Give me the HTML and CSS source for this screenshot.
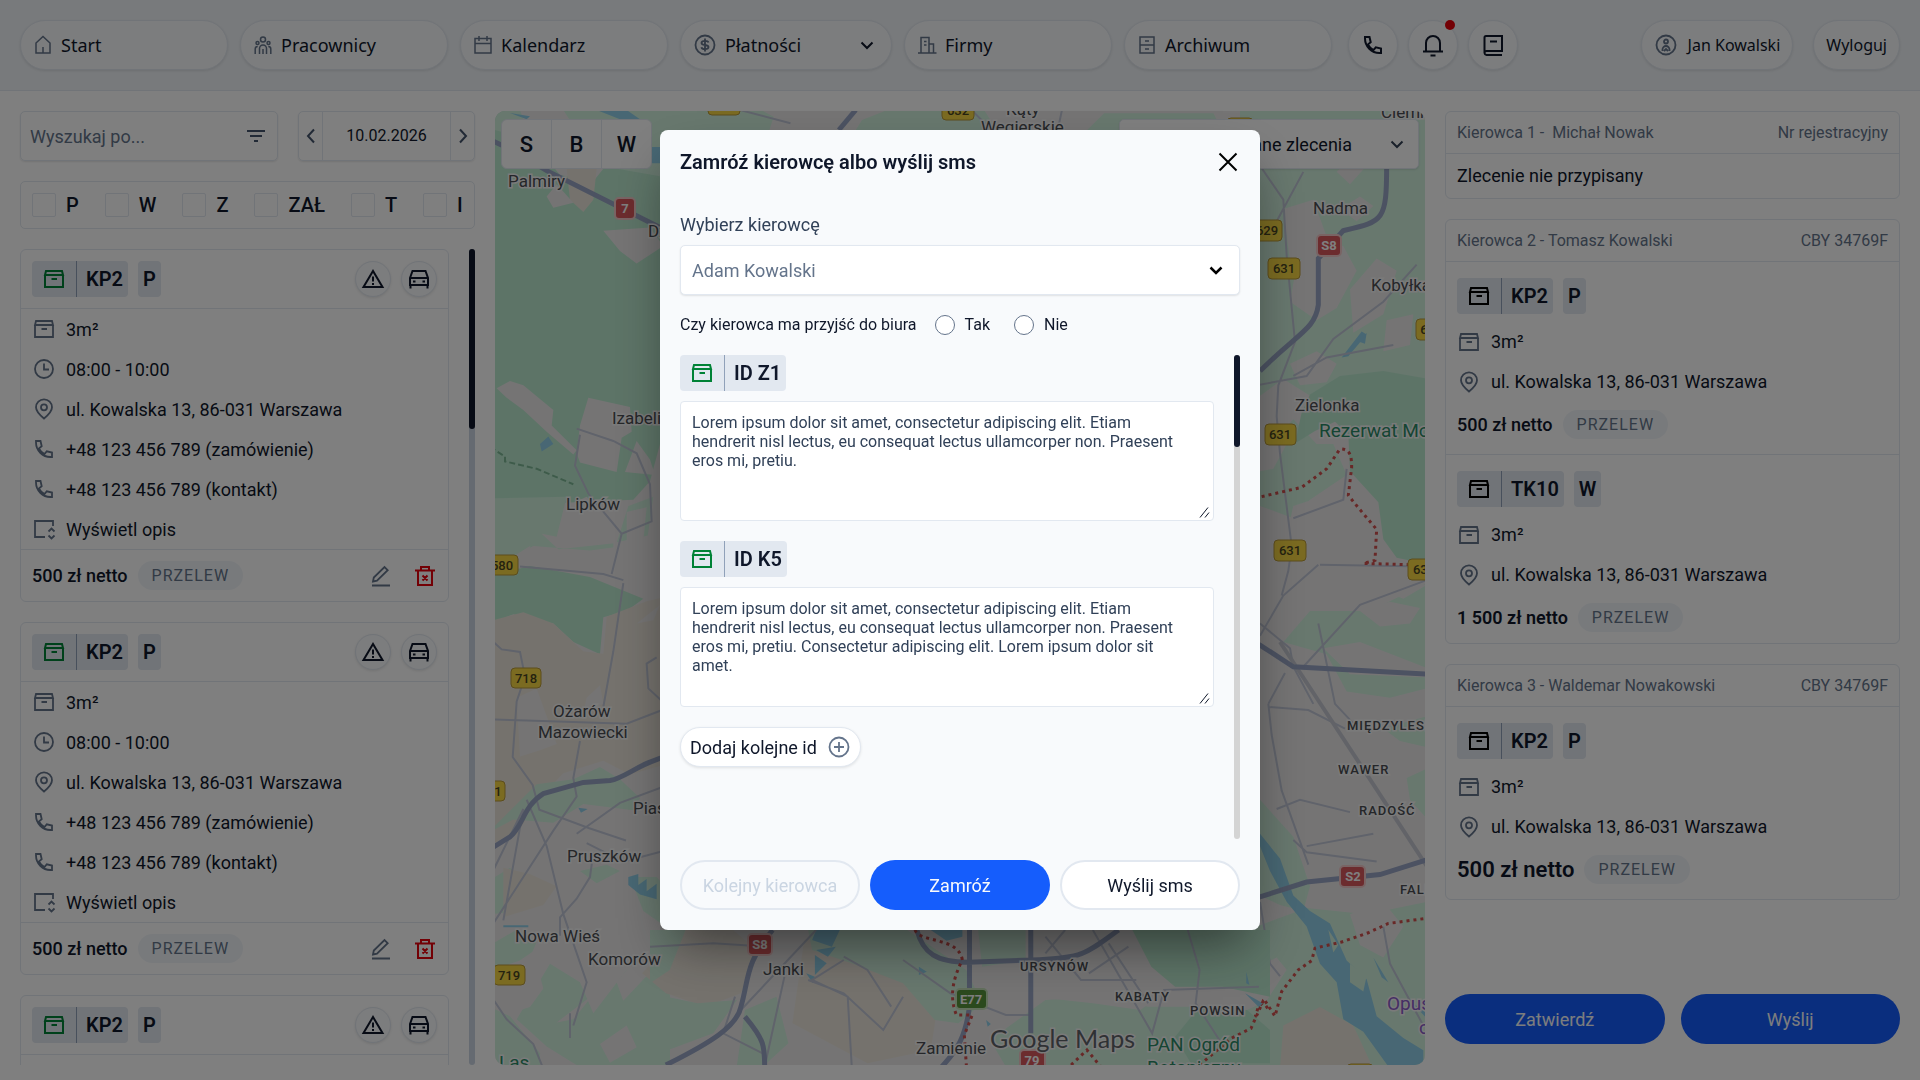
FILE: index.html
```html
<!DOCTYPE html>
<html lang="pl">
<head>
  <meta charset="UTF-8">
  <meta name="viewport" content="width=device-width, initial-scale=1">
  <title>Panel zleceń</title>
  <link rel="stylesheet" href="styles.css">
</head>
<body>
  <!-- ikony -->
  <svg class="sprite" aria-hidden="true">
    <symbol id="i-box" viewBox="0 0 24 24"><path d="M3 8v12h18V8M3 8l1-4h16l1 4zM9.5 12H15"/></symbol>
    <symbol id="i-clock" viewBox="0 0 24 24"><circle cx="12" cy="12" r="9"/><path d="M12 6.5v6h5"/></symbol>
    <symbol id="i-pin" viewBox="0 0 24 24"><path d="M12 21.5C9 19 4 15 4 10.3a8 8 0 0 1 16 0C20 15 15 19 12 21.5z"/><circle cx="12" cy="10.3" r="3"/></symbol>
    <symbol id="i-phone" viewBox="0 0 24 24"><path d="M4 4h4.5l1.2 5.2-2.8 2.3a13 13 0 0 0 5.6 5.6l2.3-2.8L20 15.5V20h-1.5C10.5 20 4 13.5 4 5.5z"/></symbol>
    <symbol id="i-desc" viewBox="0 0 24 24"><path d="M21 9V4H3v16h10M16.5 14.5l3-3 3 3M16.5 18.5l3 3 3-3"/></symbol>
    <symbol id="i-edit" viewBox="0 0 24 24"><path d="M3 21.5h18M4 17.5l.8-4L15.5 3l3.2 3.2L8 16.7z"/></symbol>
    <symbol id="i-trash" viewBox="0 0 24 24"><path d="M2 6.5h20M8 6.5V3h8v3.5M5 6.5V21h14V6.5M9.5 11.5l5 5M14.5 11.5l-5 5"/></symbol>
    <symbol id="i-warn" viewBox="0 0 24 24"><path d="M12 4L2.5 20h19zM12 9.5v5M12 16v2"/></symbol>
    <symbol id="i-car" viewBox="0 0 24 24"><path d="M3 11l2.5-7h13L21 11v7H3zM3 11h18M3.5 18v3.5M20.5 18v3.5M6 14.5h2.5M15.5 14.5H18"/></symbol>
    <symbol id="i-chev" viewBox="0 0 24 24"><path d="M6.5 9.5L12 15l5.5-5.5"/></symbol>
    <symbol id="i-left" viewBox="0 0 24 24"><path d="M15 5.5L9 12l6 6.5"/></symbol>
    <symbol id="i-right" viewBox="0 0 24 24"><path d="M9 5.5l6 6.5-6 6.5"/></symbol>
    <symbol id="i-filter" viewBox="0 0 24 24"><path d="M3 7h18M6 12h12M10 17h4"/></symbol>
    <symbol id="i-home" viewBox="0 0 20 20"><path d="M3 8l7-6.5L17 8v10H3zM10 12v6"/></symbol>
    <symbol id="i-people" viewBox="0 0 20 20"><circle cx="10" cy="4.5" r="2.5"/><circle cx="4.5" cy="8" r="1.5"/><circle cx="15.5" cy="8" r="1.5"/><path d="M6.5 19v-5.5a3.5 3.5 0 0 1 7 0V19M2.2 19v-5c0-1.5.8-2.5 2.5-2.5M17.8 19v-5c0-1.5-.8-2.5-2.5-2.5M10 14v5"/></symbol>
    <symbol id="i-cal" viewBox="0 0 20 20"><path d="M2 3.5h16V18H2zM2 8.5h16M6 1v5M14 1v5"/></symbol>
    <symbol id="i-dollar" viewBox="0 0 24 24"><circle cx="12" cy="12" r="9.5"/><path d="M15.5 9.5C15 8 13.500 7.800 12 7.800c-2 0-3.500.7-3.500 2.100 0 3 7 1.200 7 4.200 0 1.400-1.500 2.100-3.500 2.100-1.600 0-3.200-.4-3.600-2M12 5.500v13"/></symbol>
    <symbol id="i-firm" viewBox="0 0 20 20"><path d="M1 18h18.5M4 18V2.5h8V18M12 9h4.5v9M7 6.5h2.5M7 10h2.5"/></symbol>
    <symbol id="i-arch" viewBox="0 0 20 20"><path d="M3 2h14v16H3zM3 10h14M8 6h4M8 14h4"/></symbol>
    <symbol id="i-bell" viewBox="0 0 24 24"><path d="M5 18.5V10a7 7 0 0 1 14 0v8.5M2 18.5h20M9.5 22.5h5"/></symbol>
    <symbol id="i-book" viewBox="0 0 24 24"><path d="M21 22H5.5A2.2 2.2 0 0 1 3.5 20V4.5c0-1 .8-1.5 1.5-1.5h16v15H5.500c-1.300 0-2 .8-2 2M9 8.500h7"/></symbol>
    <symbol id="i-user" viewBox="0 0 24 24"><circle cx="12" cy="12" r="9.5"/><circle cx="12" cy="8.5" r="2"/><path d="M8.5 18v-1.5a3.5 3.5 0 0 1 7 0V18M10 18l2-2 2 2"/></symbol>
    <symbol id="i-close" viewBox="0 0 24 24"><path d="M3.5 3.5l17 17M20.5 3.5l-17 17"/></symbol>
    <symbol id="i-plus" viewBox="0 0 24 24"><circle cx="12" cy="12" r="9.5"/><path d="M12 7v10M7 12h10"/></symbol>
  </svg>

  <header class="topbar">
    <nav class="nav">
      <a href="#" class="pill"><svg class="icon icon-sm"><use href="#i-home"/></svg>Start</a>
      <a href="#" class="pill"><svg class="icon icon-sm"><use href="#i-people"/></svg>Pracownicy</a>
      <a href="#" class="pill"><svg class="icon icon-sm"><use href="#i-cal"/></svg>Kalendarz</a>
      <button class="pill pill-menu"><svg class="icon"><use href="#i-dollar"/></svg>Płatności<svg class="icon icon-dark pill-arrow"><use href="#i-chev"/></svg></button>
      <a href="#" class="pill"><svg class="icon icon-sm"><use href="#i-firm"/></svg>Firmy</a>
      <a href="#" class="pill"><svg class="icon icon-sm"><use href="#i-arch"/></svg>Archiwum</a>
    </nav>
    <div class="quick">
      <button class="round" aria-label="Telefon"><svg class="icon icon-dark"><use href="#i-phone"/></svg></button>
      <button class="round" aria-label="Powiadomienia"><svg class="icon icon-dark"><use href="#i-bell"/></svg><span class="dot"></span></button>
      <button class="round" aria-label="Notatnik"><svg class="icon icon-dark"><use href="#i-book"/></svg></button>
    </div>
    <div class="account">
      <a href="#" class="pill pill-small"><svg class="icon"><use href="#i-user"/></svg>Jan Kowalski</a>
      <button class="pill pill-small">Wyloguj</button>
    </div>
  </header>

  <main class="layout">
    <section class="orders">
      <div class="tools">
        <label class="search">
          <input type="text" placeholder="Wyszukaj po..." aria-label="Wyszukaj">
          <svg class="icon icon-mid"><use href="#i-filter"/></svg>
        </label>
        <div class="date">
          <button aria-label="Poprzedni dzień"><svg class="icon icon-mid"><use href="#i-left"/></svg></button>
          <span>10.02.2026</span>
          <button aria-label="Następny dzień"><svg class="icon icon-mid"><use href="#i-right"/></svg></button>
        </div>
      </div>

      <div class="filters">
        <label><input type="checkbox">P</label>
        <label><input type="checkbox">W</label>
        <label><input type="checkbox">Z</label>
        <label><input type="checkbox">ZAŁ</label>
        <label><input type="checkbox">T</label>
        <label><input type="checkbox">I</label>
      </div>

      <div class="scroll">
        <div class="order-list">
          <article class="card">
            <div class="card-head">
              <span class="tag tag-split"><svg class="icon icon-green"><use href="#i-box"/></svg><b>KP2</b></span>
              <span class="tag">P</span>
              <button class="round round-sm push" aria-label="Uwaga"><svg class="icon icon-dark"><use href="#i-warn"/></svg></button>
              <button class="round round-sm" aria-label="Pojazd"><svg class="icon icon-dark"><use href="#i-car"/></svg></button>
            </div>
            <ul class="details">
              <li><svg class="icon"><use href="#i-box"/></svg>3m²</li>
              <li><svg class="icon"><use href="#i-clock"/></svg>08:00 - 10:00</li>
              <li><svg class="icon"><use href="#i-pin"/></svg>ul. Kowalska 13, 86-031 Warszawa</li>
              <li><svg class="icon"><use href="#i-phone"/></svg>+48 123 456 789 (zamówienie)</li>
              <li><svg class="icon"><use href="#i-phone"/></svg>+48 123 456 789 (kontakt)</li>
              <li><svg class="icon"><use href="#i-desc"/></svg>Wyświetl opis</li>
            </ul>
            <div class="card-foot">
              <span class="price">500 zł netto</span><span class="chip">PRZELEW</span>
              <button class="plain push" aria-label="Edytuj"><svg class="icon"><use href="#i-edit"/></svg></button>
              <button class="plain" aria-label="Usuń"><svg class="icon icon-red"><use href="#i-trash"/></svg></button>
            </div>
          </article>

          <article class="card">
            <div class="card-head">
              <span class="tag tag-split"><svg class="icon icon-green"><use href="#i-box"/></svg><b>KP2</b></span>
              <span class="tag">P</span>
              <button class="round round-sm push" aria-label="Uwaga"><svg class="icon icon-dark"><use href="#i-warn"/></svg></button>
              <button class="round round-sm" aria-label="Pojazd"><svg class="icon icon-dark"><use href="#i-car"/></svg></button>
            </div>
            <ul class="details">
              <li><svg class="icon"><use href="#i-box"/></svg>3m²</li>
              <li><svg class="icon"><use href="#i-clock"/></svg>08:00 - 10:00</li>
              <li><svg class="icon"><use href="#i-pin"/></svg>ul. Kowalska 13, 86-031 Warszawa</li>
              <li><svg class="icon"><use href="#i-phone"/></svg>+48 123 456 789 (zamówienie)</li>
              <li><svg class="icon"><use href="#i-phone"/></svg>+48 123 456 789 (kontakt)</li>
              <li><svg class="icon"><use href="#i-desc"/></svg>Wyświetl opis</li>
            </ul>
            <div class="card-foot">
              <span class="price">500 zł netto</span><span class="chip">PRZELEW</span>
              <button class="plain push" aria-label="Edytuj"><svg class="icon"><use href="#i-edit"/></svg></button>
              <button class="plain" aria-label="Usuń"><svg class="icon icon-red"><use href="#i-trash"/></svg></button>
            </div>
          </article>

          <article class="card">
            <div class="card-head">
              <span class="tag tag-split"><svg class="icon icon-green"><use href="#i-box"/></svg><b>KP2</b></span>
              <span class="tag">P</span>
              <button class="round round-sm push" aria-label="Uwaga"><svg class="icon icon-dark"><use href="#i-warn"/></svg></button>
              <button class="round round-sm" aria-label="Pojazd"><svg class="icon icon-dark"><use href="#i-car"/></svg></button>
            </div>
            <ul class="details">
              <li></li>
            </ul>
          </article>
        </div>
        <div class="scrollbar"><div class="thumb"></div></div>
      </div>
    </section>

    <section class="map">
      <svg class="map-canvas" viewBox="495 111 930 954" preserveAspectRatio="xMidYMid slice" aria-label="Mapa">
        <rect class="land" x="495" y="111" width="930" height="954"/>
        <!-- zachód -->
        <g transform="translate(490 110) scale(.3333 .6186)">
          <path class="forest" d="M0 0H540V480L500 560 480 600 430 630 0 640z"/>
          <path class="park" d="M0 0H540V110L330 90 200 60 0 30zM0 628L230 625 200 690 155 685 205 710 380 700 415 640 490 625 470 700 300 712 130 705 0 745z"/>
          <path class="land" d="M90 0h130l60 50 60 45-30 20-100-10-90-60zM20 450l40-12 40 7 90 40-5 25 75 40-10 7-80-37-70-35-50-20zM295 465l125 15 5 40-30 10-15 55-110-15-10-15 10-45zM340 195l140-5 40 30-80 28-50-20zM440 535l40 30 15 25-90-5z"/>
          <path class="field" d="M230 95h90l-10 50-30 20-40-20z"/>
          <path class="land" d="M200 120l50 30-60 8-20-18zM230 640l60-15 60 30-50 12-70-5zM410 650l60-8-10 55h-50z"/>
          <path class="forest" d="M0 750l100-15 200 20 160 35-50 20-70 10-10 60-80-20-60-30-120-15-70 15z"/>
          <path class="land" d="M0 745l120-40 10 30-40 6zM370 700l170-20v80l-60 30-110-40z"/>
          <path class="field" d="M0 826l100-14 90 18 90 45 60 4 10-60 120-25 80-10v270l-130 20-80-22-120 20-80 45-60 55-80 15z"/>
          <path class="land" d="M80 950l60-15 60 90-50 10-60 10zM440 830l70-30-20 25zM290 950l40-20 10 30-60 15z"/>
          <path class="park" d="M0 1165l140-75 110-8 80-20 60 20 60 30-20 20-150-10-90 30-120-5-70 20zM0 1245l60-20 60 30-20 40-100 5zM270 1230l80-10 40 10-70 20zM420 1240l80 0 40 25v60l-80-30z"/>
          <path class="field" d="M40 1225l80 10 80 20-40 30-120 20z"/>
          <path class="park" d="M0 1350l80-25 60 20-20 25-60 10-60 25zM80 1470l100-90 90 30 40 50 100-70 130 20v134H260l-90-30z"/>
          <path class="park" d="M0 1450l60 15 90 60v25H0z"/>
          <path class="land" d="M20 1400l110-40 30 60-40 30-70 12zM200 1475l110-45-60 40zM380 1410l60-40 30 30-70 40zM330 1510l80-30 30 35-80 25z"/>
          <path class="water" d="M150 540l25-12 15 12-35 12zM60 5l60 5-10 5zM480 60h40v26h-40zM320 0h90l40 15h-60zM415 1240l30-5 0 18 25-10 0 20 30-12v25l-50-8-35-15zM40 1318h75v3H40zM265 1128l28 2-20 6z"/>
          <path class="road" d="M0 855l35 17 55 4 15 40-25 40-12 90 60 45 20 40 150 30 110 20M400 765l-30 110-30 90M270 1020l-20 60 10 30-70 55-180 150M400 760L340 750 90 738M270 525l-15 50 40 45 100 65 90-20-5-60-40-50-70-20-110-20M395 685l-30 65M0 985l110 2 300 5 130-27M310 1200l-10 40-40 35-50 30 0 30M0 1430l50 40 80 40 30 40M250 1480l40-70-70-110-50-110-60-75M500 885l-30 10 5 40 40 20M290 1185l110 30 140-20M260 1170l130-50 150-30M240 1500l0-40M0 1240l100-110-60 180"/>
          <path class="highway" d="M0 48l60 15 110 35 370 100M0 1195l60-20c40-18 40-50 100-70l120-18 80-3c50-5 90-30 180-40"/>
          <path class="trail" d="M0 545l45 15 0 8 95 12 110 25"/>
        </g>
        <!-- północ -->
        <g transform="translate(660 0) scale(.4209 .3333)">
          <path class="park" d="M0 330h240l30 20-10 40H0zM480 360l60-30h230l30 60H465zM1015 390l40-50h260l20 50z"/>
          <path class="road" d="M190 330l120 40M740 330l40 50M955 330l-10 60"/>
          <path class="highway" d="M465 330l-40 60"/>
        </g>
        <!-- wschód -->
        <g transform="translate(1240 110) scale(.3333 .6186)">
          <path class="park" d="M0 0h560v440l-140-15-120 10-80 30-90-30-130 50zM60 560l100-60 70 40 50 0 40 50-110 40-50 30-100-20z"/>
          <path class="forest" d="M210 460l90-30 130-8 130 12v300l-90-10-40-30-15-60-85-50-5-60-40-20-60 15-60 20 20-50z"/>
          <path class="land" d="M130 160l90-15 40 60-40 30-70 10zM170 250l60-40 80 10 40 40-60 60-60 20-80-30zM330 290l80-50 60 20-40 70-90 30zM150 410l80-20 60 20-30 30-80 5zM300 160l60-20 40 15-50 25zM440 340l80-10-10 50-80 10zM0 480l100-10 60 50-60 60-100 10z"/>
          <path class="land" d="M160 640l140-25 25 30-5 45-130 30-60-10zM290 100l40-20 50 10-50 30z"/>
          <path class="park" d="M130 860l80-50 120 0 60 0 170-45v170l-110 15-130-10-60-60z"/>
          <path class="land" d="M360 810l90-15 90 10-30 25-90 5zM400 770l70-10 90 8-70 22zM250 870l110-10 200 42v15l-230-5z"/>
          <path class="park" d="M430 1000l130-20v50l-80-10zM500 1080l60-15v80l-50-30zM0 1130l60-15 100 60 50 80-20 40-70-10-120-30z"/>
          <path class="park" d="M0 1330l200-40 180 10 180-20v270H0z"/>
          <path class="land" d="M0 1400l110-30 30 20-60 50-80 20zM330 1300l100-20 60 40-60 50-70-20z"/>
          <path class="field" d="M130 1480l110-30 100 30 60 70H120z"/>
          <path class="water" d="M60 1170l60 40 40 60 50 25 60 20 50 60 60 30 30 60 80 35 60 20v30h-100l-80-60-60-20-20-60-50-30-40-60-60-40-50-50-30-40z"/>
          <path class="park" d="M330 1380l50 20-10 25-40-15zM265 1325l30 25-15 12z"/>
          <path class="water" d="M305 400l60-42 15 5-55 35zM360 375l20-15-5 18zM15 1395l20 15-10 5zM400 1370l45 40-20-8zM510 1440l50 20v8z"/>
          <path class="road" d="M60 90l70 55 10 90 25 140-50 70-5 50 10 60 35 150-10 40-20 40M240 735l320 3M60 850l70-65 105-50M85 960l10 50 30 90 80 120M85 960l50-50M60 830l90 40 10 30 60 60M235 830l50 130 70 40M85 965l120 5 110 30M190 900l170-100 200-40M110 1130l70-15 150 20M200 1190l200-20M160 1180l40 20 210 15M0 450l200-20 80-60 150-60 100-60M160 430l100-30 200-20M160 660l150-30 10-50M430 1320l20 60 40 40 60 60M60 1280l30 100 30 20M0 1035l60 0M190 100l-80 80"/>
          <path class="rail" d="M120 860l450 370"/>
          <path class="highway" d="M440 90c0 90-10 90-130 105l-75 45v75c-10 40-60 45-175 107M0 870l60-5 100 35 400 12M0 1280l60-8 140-24 220-12 140-24"/>
          <path class="border" d="M65 625l120-15 75-30 40-32c30 0 35 10 35 30l-10 45 30 20 55 35-5 50-35 5 140 2M0 1490l40-15 15-25 20-10 30 25 20-40 50-35 40-15 10-20 80-10 80-15 60-15 110-8"/>
        </g>
        <!-- południe -->
        <g transform="translate(650 900) scale(.3954 .3333)">
          <path class="field" d="M80 90h130l60 60-40 130-90 40-100-40-60-60zM390 120l110-20 160 110 70 90-20 150-160 40-190-120z"/>
          <path class="park" d="M0 90h90l-40 120-50 40zM400 90h250l150 120 40 100-60 60-60-10-80-110-130-60-100-40zM830 90h120v90l-110 20zM0 280l120 30 100-10-60 100-160 70zM1000 300l150-10 110 30 120 0 188 50v130H900l-40-80z"/>
          <path class="forest" d="M1220 90h348v200l-120-30-120 0-60-60zM1390 320l120 10 58 60v100h-200l-40-80z"/>
          <path class="land" d="M980 90h240l-90 80-130 20zM960 200h300l40 80-60 50-120-20-150-20z"/>
          <path class="park" d="M0 90h80l-10 30zM240 330l80-40 30 140-60 65h-70z"/>
          <path class="water" d="M420 90h60l-20 50-50-20zM420 150l50-10-20 30zM417 165l30 25-30 35zM395 220l22 10-5 20zM680 200l20 15-20 10zM850 360l12 12-8 8zM1508 215l8 40-8-5zM1505 280l45 30-10 12z"/>
          <path class="water" d="M710 90h80v20l-40 12z"/>
          <path class="road" d="M0 140l160-10 140 10M420 90L230 330M340 230l-50 270M490 180l-80 60 90 50 10 205M490 170l60 40 60 110M400 240l90 40 100 110 50-100M640 180l120 100 140 65 60 0M1120 90l150 310 30-130 240-10M1360 90l30 120-10 100 60 110M1000 110l90 130 140 0M1050 90l-50 70M1160 130l100 180M215 290l-30 110 100 60M1110 220l100-80"/>
          <path class="highway" d="M310 90c-70 100-60 150-80 230-10 60-80 110-190 175M240 350c50 70 50 90 50 150M808 90v230c-10 90-30 130-70 180M963 90v310M675 90c15 70 50 97 130 97l180-8c110-5 120-20 200-89"/>
          <path class="border" d="M670 90c15 40 110 20 120 90-30 70-30 120-15 165h40l-20 60 5 90M1065 495l40-45 35 50M1390 495l80-80 50-30 30-80 18 30"/>
        </g>
        <g class="place">
          <text x="508" y="187">Palmiry</text><text x="648" y="237">Dziekanów</text>
          <text x="612" y="424">Izabelin</text><text x="566" y="510">Lipków</text>
          <text x="553" y="717">Ożarów</text><text x="538" y="738">Mazowiecki</text>
          <text x="633" y="814">Piastów</text><text x="567" y="862">Pruszków</text>
          <text x="515" y="942">Nowa Wieś</text><text x="588" y="965">Komorów</text>
          <text x="763" y="975">Janki</text><text x="916" y="1054">Zamienie</text>
          <text x="1006" y="115">Kąty</text><text x="981" y="133">Węgierskie</text>
          <text x="1381" y="118">Ciemne</text><text x="1313" y="214">Nadma</text>
          <text x="1371" y="291">Kobyłka</text><text x="1295" y="411">Zielonka</text>
        </g>
        <g class="district">
          <text x="1347" y="730">MIĘDZYLESIE</text><text x="1338" y="774">WAWER</text><text x="1359" y="815">RADOŚĆ</text>
          <text x="1400" y="894">FALENICA</text><text x="1020" y="971">URSYNÓW</text><text x="1115" y="1001">KABATY</text><text x="1190" y="1015">POWSIN</text>
        </g>
        <g class="nature">
          <text x="499" y="1069">Las</text><text x="1319" y="437">Rezerwat Modrzewina</text>
          <text x="1147" y="1051">PAN Ogród</text><text x="1147" y="1074">Botaniczny</text>
          <text class="purple" x="1387" y="1010">Opusz.</text><text class="purple" x="1419" y="1034">c</text>
        </g>
        <g class="shield">
          <rect x="489" y="555" width="29" height="20" rx="4"/><text x="502" y="570">580</text>
          <rect x="511" y="668" width="30" height="20" rx="4"/><text x="526" y="683">718</text>
          <rect x="475" y="781" width="30" height="20" rx="4"/><text x="498" y="796">1</text>
          <rect x="494" y="965" width="31" height="20" rx="4"/><text x="509" y="980">719</text>
          <rect x="708" y="95" width="32" height="20" rx="4"/>
          <rect x="942" y="100" width="32" height="20" rx="4"/><text x="958" y="115">632</text>
          <rect x="1227" y="118" width="26" height="20" rx="4"/>
          <rect x="1251" y="220" width="31" height="21" rx="4"/><text x="1267" y="235">629</text>
          <rect x="1268" y="258" width="32" height="21" rx="4"/><text x="1284" y="273">631</text>
          <rect x="1416" y="319" width="32" height="21" rx="4"/><text x="1424" y="334">6</text>
          <rect x="1265" y="424" width="31" height="21" rx="4"/><text x="1280" y="439">631</text>
          <rect x="1274" y="540" width="32" height="21" rx="4"/><text x="1290" y="555">631</text>
          <rect x="1408" y="559" width="32" height="21" rx="4"/><text x="1424" y="574">634</text>
          <rect x="1347" y="1064" width="26" height="20" rx="4"/>
        </g>
        <g class="shield shield-red">
          <rect x="615" y="198" width="20" height="21" rx="4"/><text x="625" y="213">7</text>
          <rect x="1317" y="235" width="24" height="21" rx="4"/><text x="1329" y="250">S8</text>
          <rect x="1340" y="866" width="25" height="21" rx="4"/><text x="1353" y="881">S2</text>
          <rect x="748" y="934" width="24" height="21" rx="4"/><text x="760" y="949">S8</text>
          <rect x="1020" y="1050" width="25" height="21" rx="4"/><text x="1032" y="1065">79</text>
        </g>
        <g class="shield shield-green">
          <rect x="956" y="989" width="31" height="20" rx="4"/><text x="971" y="1004">E77</text>
        </g>
        <text class="logo" x="990" y="1048">Google Maps</text>
      </svg>

      <div class="map-tools">
        <div class="map-switch">
          <button>S</button><button>B</button><button>W</button>
        </div>
        <div class="select map-select">
          <select aria-label="Zlecenia na mapie"><option>Niezaplanowane zlecenia</option></select>
          <svg class="icon icon-navy"><use href="#i-chev"/></svg>
        </div>
      </div>
    </section>

    <section class="drivers">
      <article class="card">
        <div class="driver-head"><span class="driver-name">Kierowca 1 -  Michał Nowak</span><span>Nr rejestracyjny</span></div>
        <p class="empty">Zlecenie nie przypisany</p>
      </article>

      <article class="card">
        <div class="driver-head"><span class="driver-name">Kierowca 2 - Tomasz Kowalski</span><span>CBY 34769F</span></div>
        <div class="job">
          <div class="tags"><span class="tag tag-split"><svg class="icon icon-black"><use href="#i-box"/></svg><b>KP2</b></span><span class="tag">P</span></div>
          <div class="line"><svg class="icon"><use href="#i-box"/></svg>3m²</div>
          <div class="line"><svg class="icon"><use href="#i-pin"/></svg>ul. Kowalska 13, 86-031 Warszawa</div>
          <div class="line"><span class="price">500 zł netto</span><span class="chip">PRZELEW</span></div>
        </div>
        <div class="job job-tight">
          <div class="tags"><span class="tag tag-split"><svg class="icon icon-black"><use href="#i-box"/></svg><b>TK10</b></span><span class="tag">W</span></div>
          <div class="line"><svg class="icon"><use href="#i-box"/></svg>3m²</div>
          <div class="line"><svg class="icon"><use href="#i-pin"/></svg>ul. Kowalska 13, 86-031 Warszawa</div>
          <div class="line"><span class="price price-strong">1 500 zł netto</span><span class="chip">PRZELEW</span></div>
        </div>
      </article>

      <article class="card">
        <div class="driver-head"><span class="driver-name">Kierowca 3 - Waldemar Nowakowski</span><span>CBY 34769F</span></div>
        <div class="job">
          <div class="tags"><span class="tag tag-split"><svg class="icon icon-black"><use href="#i-box"/></svg><b>KP2</b></span><span class="tag">P</span></div>
          <div class="line"><svg class="icon"><use href="#i-box"/></svg>3m²</div>
          <div class="line"><svg class="icon"><use href="#i-pin"/></svg>ul. Kowalska 13, 86-031 Warszawa</div>
          <div class="line"><span class="price price-big">500 zł netto</span><span class="chip">PRZELEW</span></div>
        </div>
      </article>

      <div class="driver-actions">
        <button class="btn btn-primary">Zatwierdź</button>
        <button class="btn btn-primary">Wyślij</button>
      </div>
    </section>
  </main>

  <div class="overlay">
    <div class="modal" role="dialog" aria-modal="true" aria-labelledby="modal-title">
      <div class="modal-head">
        <h2 id="modal-title">Zamróź kierowcę albo wyślij sms</h2>
        <button class="plain" aria-label="Zamknij"><svg class="icon icon-black"><use href="#i-close"/></svg></button>
      </div>

      <label class="modal-label" for="driver">Wybierz kierowcę</label>
      <div class="select">
        <select id="driver"><option>Adam Kowalski</option></select>
        <svg class="icon icon-black icon-bold"><use href="#i-chev"/></svg>
      </div>

      <fieldset class="office">
        <legend>Czy kierowca ma przyjść do biura</legend>
        <label><input type="radio" name="office">Tak</label>
        <label><input type="radio" name="office">Nie</label>
      </fieldset>

      <div class="modal-scroll">
        <div class="messages">
          <label class="tag tag-split" for="msg-z1"><svg class="icon icon-green"><use href="#i-box"/></svg><b>ID Z1</b></label>
          <textarea id="msg-z1">Lorem ipsum dolor sit amet, consectetur adipiscing elit. Etiam hendrerit nisl lectus, eu consequat lectus ullamcorper non. Praesent eros mi, pretiu.</textarea>
          <label class="tag tag-split" for="msg-k5"><svg class="icon icon-green"><use href="#i-box"/></svg><b>ID K5</b></label>
          <textarea id="msg-k5">Lorem ipsum dolor sit amet, consectetur adipiscing elit. Etiam hendrerit nisl lectus, eu consequat lectus ullamcorper non. Praesent eros mi, pretiu. Consectetur adipiscing elit. Lorem ipsum dolor sit amet.</textarea>
          <button class="add-id">Dodaj kolejne id<svg class="icon"><use href="#i-plus"/></svg></button>
        </div>
        <div class="scrollbar scrollbar-gray"><div class="thumb"></div></div>
      </div>

      <div class="modal-actions">
        <button class="btn btn-outline" disabled>Kolejny kierowca</button>
        <button class="btn btn-primary">Zamróź</button>
        <button class="btn btn-outline">Wyślij sms</button>
      </div>
    </div>
  </div>
</body>
</html>
```
FILE: styles.css
```css
* {
  box-sizing: border-box;
}
body {
  margin: 0;
  height: 100vh;
  display: flex;
  flex-direction: column;
  overflow: hidden;
  background-color: #ffffff;
  color: #0f172a;
  font-family: Roboto, "Noto Sans", sans-serif;
  font-size: 18px;
}
button, input, select, textarea {
  font: inherit;
  color: inherit;
  margin: 0;
}
button {
  cursor: pointer;
}
.sprite {
  display: none;
}
.icon {
  width: 24px;
  height: 24px;
  flex: none;
  fill: none;
  stroke: #64748b;
  stroke-width: 1.8;
}
.icon-sm {
  width: 20px;
  height: 20px;
  stroke-width: 1.5;
}
.icon-mid {
  stroke: #45556c;
  stroke-width: 2;
}
.icon-dark {
  stroke: #0f172a;
  stroke-width: 2;
}
.icon-navy {
  stroke: #334155;
  stroke-width: 2;
}
.icon-black {
  stroke: #000000;
  stroke-width: 2;
}
.icon-green {
  stroke: #008236;
  stroke-width: 2;
}
.icon-red {
  stroke: #e7000b;
  stroke-width: 2;
}
.icon-bold {
  stroke-width: 2.5;
}
.push {
  margin-left: auto;
}
.plain {
  display: flex;
  padding: 0;
  border: none;
  background: none;
}

/* topbar */
.topbar {
  display: flex;
  align-items: center;
  padding: 20px;
  background-color: #f1f5f9;
  border-bottom: 1px solid #e2e8f0;
  font-family: "Noto Sans", sans-serif;
}
.nav {
  display: flex;
  gap: 12px;
}
.pill {
  display: flex;
  align-items: center;
  gap: 8px;
  width: 208px;
  height: 50px;
  padding: 0 12px;
  border: 1px solid #e2e8f0;
  border-radius: 25px;
  background-color: #f8fafc;
  box-shadow: 0 1px 3px rgba(0, 0, 0, 0.1);
  color: #0f172a;
  text-decoration: none;
}
.pill-menu {
  width: 212px;
}
.pill-arrow {
  margin-left: auto;
}
.quick {
  display: flex;
  gap: 10px;
  margin-left: 16px;
}
.round {
  position: relative;
  display: flex;
  align-items: center;
  justify-content: center;
  width: 50px;
  height: 50px;
  padding: 0;
  border: 1px solid #e2e8f0;
  border-radius: 50%;
  background-color: #f8fafc;
  box-shadow: 0 1px 3px rgba(0, 0, 0, 0.1);
}
.round-sm {
  width: 36px;
  height: 36px;
}
.dot {
  position: absolute;
  top: -1px;
  right: 2px;
  width: 10px;
  height: 10px;
  border-radius: 50%;
  background-color: #e7000b;
}
.account {
  display: flex;
  gap: 20px;
  margin-left: auto;
}
.pill-small {
  gap: 10px;
  width: auto;
  font-size: 16px;
}

/* layout */
.layout {
  flex: 1;
  min-height: 0;
  display: grid;
  grid-template-columns: 455px 1fr 455px;
  grid-template-rows: minmax(0, 1fr);
  gap: 20px;
  padding: 20px 20px 15px;
}
.orders {
  display: flex;
  flex-direction: column;
  gap: 20px;
  min-height: 0;
}
.tools {
  display: flex;
  gap: 20px;
}
.search {
  display: flex;
  align-items: center;
  flex: 1;
  min-width: 0;
  height: 50px;
  padding: 0 9px;
  border: 1px solid #e2e8f0;
  border-radius: 5px;
  box-shadow: 0 1px 2px rgba(0, 0, 0, 0.1);
}
.search input {
  flex: 1;
  min-width: 0;
  padding: 0;
  border: none;
  outline: none;
  background: none;
}
.search input::placeholder {
  color: #64748b;
}
.date {
  display: flex;
  flex: none;
  width: 177px;
  border: 1px solid #e2e8f0;
  border-radius: 5px;
  box-shadow: 0 1px 2px rgba(0, 0, 0, 0.1);
  font-size: 16px;
}
.date span {
  flex: 1;
  line-height: 48px;
  text-align: center;
  border: solid #e2e8f0;
  border-width: 0 1px;
}
.date button {
  display: flex;
  align-items: center;
  justify-content: center;
  width: 23px;
  padding: 0;
  border: none;
  background: none;
}
.filters {
  display: flex;
  gap: 26px;
  height: 48px;
  padding: 0 11px;
  border: 1px solid #e2e8f0;
  border-radius: 5px;
  font-size: 20px;
  font-weight: 500;
}
.filters label {
  display: flex;
  align-items: center;
  gap: 10px;
}
.filters input {
  appearance: none;
  width: 24px;
  height: 24px;
  border: 1px solid #e2e8f0;
  border-radius: 2px;
}
.scroll {
  display: flex;
  gap: 20px;
  flex: 1;
  min-height: 0;
}
.order-list {
  flex: 1;
  display: flex;
  flex-direction: column;
  gap: 20px;
  overflow: hidden;
}
.scrollbar {
  width: 6px;
  border-radius: 3px;
  background-color: #cad5e2;
}
.scrollbar-gray {
  background-color: #d4d4d4;
}
.thumb {
  height: 22%;
  border-radius: 3px;
  background-color: #0f172a;
}
.scrollbar-gray .thumb {
  height: 19%;
}

/* cards */
.card {
  flex: none;
  border: 1px solid #e2e8f0;
  border-radius: 6px;
}
.card-head {
  display: flex;
  align-items: center;
  gap: 10px;
  height: 59px;
  padding: 0 11px;
  border-bottom: 1px solid #e2e8f0;
}
.tags {
  display: flex;
  gap: 10px;
}
.tag {
  display: inline-flex;
  align-items: center;
  height: 36px;
  padding: 0 5px;
  border-radius: 4px;
  background-color: #e2e8f0;
  font-size: 20px;
  font-weight: 600;
}
.tag-split .icon {
  margin: 0 10px 0 5px;
}
.tag-split b {
  padding-left: 9px;
  border-left: 1px solid #90a1b9;
  font-weight: 600;
  line-height: 36px;
}
.details {
  margin: 0;
  padding: 0 11px;
  list-style: none;
}
.details li, .line {
  display: flex;
  align-items: center;
  gap: 10px;
}
.details li {
  height: 40px;
}
.card-foot {
  display: flex;
  align-items: center;
  gap: 10px;
  height: 52px;
  padding: 0 11px;
  border-top: 1px solid #e2e8f0;
}
.card-foot .push {
  margin-right: 10px;
}
.line {
  line-height: 24px;
}
.price {
  font-weight: 500;
}
.price-strong {
  font-weight: 600;
}
.price-big {
  font-size: 22px;
  font-weight: 600;
}
.chip {
  height: 29px;
  padding: 0 14px;
  border-radius: 15px;
  background-color: #f1f5f9;
  color: #64748b;
  font-size: 16px;
  line-height: 29px;
  letter-spacing: 1px;
}
.drivers {
  display: flex;
  flex-direction: column;
  gap: 20px;
}
.driver-head {
  display: flex;
  justify-content: space-between;
  padding: 0 11px;
  border-bottom: 1px solid #e2e8f0;
  color: #64748b;
  font-size: 16px;
  line-height: 41px;
}
.driver-name {
  white-space: pre;
}
.empty {
  margin: 0;
  padding: 0 11px;
  line-height: 44px;
}
.job {
  display: flex;
  flex-direction: column;
  gap: 16px;
  padding: 16px 11px 15px;
}
.job + .job {
  border-top: 1px solid #e2e8f0;
}
.job-tight {
  padding-bottom: 11px;
}
.driver-actions {
  display: flex;
  gap: 16px;
  margin-top: auto;
  margin-bottom: 21px;
}
.driver-actions .btn {
  flex: 1;
}
.btn {
  height: 50px;
  border: none;
  border-radius: 25px;
}
.btn-primary {
  background-color: #155dfc;
  color: #f8fafc;
}
.btn-outline {
  border: 2px solid #e2e8f0;
  background-color: #ffffff;
}
.btn-outline:disabled {
  background-color: #f8fafc;
  color: #cad5e2;
}

/* map */
.map {
  position: relative;
  border-radius: 10px;
  overflow: hidden;
}
.map-canvas {
  position: absolute;
  width: 100%;
  height: 100%;
}
.land {
  fill: #ebe9e9;
}
.park {
  fill: #d0f0dd;
}
.forest {
  fill: #bbe9cf;
}
.field {
  fill: #ebe5db;
}
.water {
  fill: #90cfe8;
}
.map-canvas path {
  vector-effect: non-scaling-stroke;
}
.road, .rail, .highway, .trail, .border {
  fill: none;
}
.road {
  stroke: #c0c6d6;
  stroke-width: 2;
}
.rail {
  stroke: #c4c7d0;
  stroke-width: 4;
}
.highway {
  stroke: #98a5c4;
  stroke-width: 5;
}
.trail {
  stroke: #7cb795;
  stroke-width: 2;
  stroke-dasharray: 6 3;
}
.border {
  stroke: #d0504e;
  stroke-width: 3;
  stroke-dasharray: 3 4;
}
.place, .district, .nature, .logo {
  fill: #4a4d52;
  stroke: #f5f5f5;
  stroke-width: 3;
  paint-order: stroke;
}
.place {
  font-size: 17px;
}
.district {
  font-size: 13px;
  font-weight: 500;
  letter-spacing: 1px;
}
.nature {
  fill: #2b8a66;
  font-size: 19px;
}
.purple {
  fill: #8b5cc9;
}
.shield rect {
  fill: #f6d743;
  stroke: #b99a3a;
  stroke-width: 1;
}
.shield text {
  fill: #4a4520;
  font-size: 13px;
  font-weight: 500;
  text-anchor: middle;
}
.shield-red rect {
  fill: #d9585c;
  stroke: #f3c9c9;
  stroke-width: 2;
}
.shield-green rect {
  fill: #57943b;
  stroke: #c5dfb8;
  stroke-width: 2;
}
.shield-red text, .shield-green text {
  fill: #ffffff;
  font-weight: 700;
}
.logo {
  font-family: Lato, sans-serif;
  font-size: 25px;
  fill: #5f6368;
}
.map-tools {
  position: relative;
  display: flex;
  justify-content: space-between;
  padding: 8px 6px;
}
.map-switch {
  display: flex;
  height: 50px;
  border: 1px solid #e2e8f0;
  border-radius: 6px;
  background-color: #ffffff;
  overflow: hidden;
}
.map-switch button {
  width: 49px;
  padding: 0;
  border: none;
  background: none;
  font-size: 22px;
  font-weight: 500;
}
.map-switch button + button {
  width: 50px;
  border-left: 1px solid #e2e8f0;
}
.select {
  position: relative;
}
.select select {
  appearance: none;
  display: block;
  width: 100%;
  height: 50px;
  padding: 0 11px;
  border: 1px solid #e2e8f0;
  border-radius: 5px;
  background-color: #ffffff;
  box-shadow: 0 1px 2px rgba(0, 0, 0, 0.1);
  color: #64748b;
}
.select .icon {
  position: absolute;
  top: 13px;
  right: 12px;
  pointer-events: none;
}
.map-select {
  width: 300px;
}
.map-select select {
  padding-right: 66px;
  color: #0f172a;
  text-align-last: right;
}
.map-select .icon {
  right: 10px;
}

/* modal */
.overlay {
  position: fixed;
  inset: 0;
  display: flex;
  align-items: flex-start;
  justify-content: center;
  padding-top: 130px;
  background-color: rgba(0, 0, 0, 0.5);
}
.modal {
  display: flex;
  flex-direction: column;
  width: 600px;
  padding: 20px;
  border-radius: 8px;
  background-color: #f8fafc;
  box-shadow: 0 25px 50px -12px rgba(0, 0, 0, 0.5);
}
.modal-head {
  display: flex;
  align-items: center;
  justify-content: space-between;
  height: 24px;
  margin-bottom: 40px;
}
.modal-head h2 {
  margin: 0;
  font-size: 20px;
  font-weight: 600;
}
.modal-label {
  margin-bottom: 10px;
  color: #314158;
  line-height: 21px;
}
.office {
  display: flex;
  align-items: center;
  margin: 20px 0;
  padding: 0;
  border: none;
  font-size: 16px;
  line-height: 20px;
}
.office legend {
  float: left;
  padding: 0;
}
.office label {
  display: flex;
  align-items: center;
  gap: 10px;
  margin-left: 18px;
}
.office label + label {
  margin-left: 24px;
}
.office input {
  appearance: none;
  width: 20px;
  height: 20px;
  border: 1px solid #64748b;
  border-radius: 50%;
  background-color: #ffffff;
}
.modal-scroll {
  display: flex;
  gap: 20px;
  min-height: 484px;
  margin-bottom: 21px;
}
.messages {
  flex: 1;
  display: flex;
  flex-direction: column;
  align-items: flex-start;
}
.messages textarea {
  width: 100%;
  height: 120px;
  margin: 10px 0 20px;
  padding: 11px 24px 11px 11px;
  border: 1px solid #e2e8f0;
  border-radius: 4px;
  background-color: #ffffff;
  color: #314158;
  font-size: 16px;
  line-height: 19px;
}
.messages textarea::-webkit-resizer {
  background: url("data:image/svg+xml,%3Csvg xmlns='http://www.w3.org/2000/svg' width='15' height='15' fill='none' stroke='%230f172a'%3E%3Cpath d='M2 12.5l8-10M7 12.5l4-5'/%3E%3C/svg%3E") no-repeat;
}
.add-id {
  display: flex;
  align-items: center;
  gap: 10px;
  height: 40px;
  padding: 0 9px;
  border: 1px solid #e2e8f0;
  border-radius: 20px;
  background-color: #ffffff;
  box-shadow: 0 1px 3px rgba(0, 0, 0, 0.1);
}
.modal-actions {
  display: grid;
  grid-template-columns: repeat(3, 1fr);
  gap: 10px;
}
.modal-actions .btn {
  padding: 0;
}
```
